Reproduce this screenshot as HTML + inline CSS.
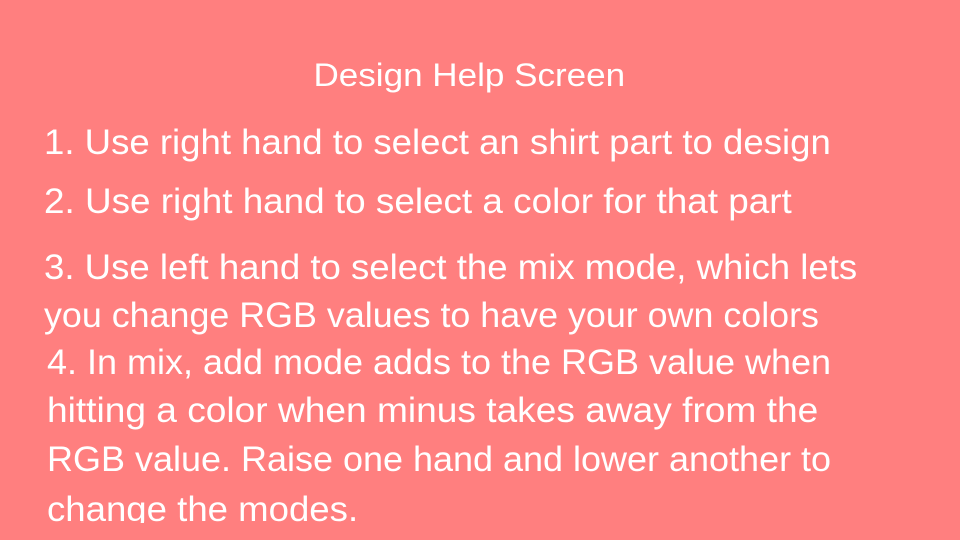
<!DOCTYPE html>
<html><head><meta charset="utf-8"><style>
html,body{margin:0;padding:0;}
body{width:960px;height:540px;background:#FF7F7F;position:relative;overflow:hidden;font-family:"Liberation Sans",sans-serif;color:#fff;}
.clip{position:absolute;left:0;top:0;width:960px;height:523px;overflow:hidden;}
.l{position:absolute;white-space:nowrap;font-size:35px;line-height:40px;transform-origin:left center;transform:scaleX(1.045);}
.t{position:absolute;left:-11px;width:960px;text-align:center;top:55px;font-size:32px;line-height:40px;}
.t span{display:inline-block;transform:scaleX(1.095);}
</style></head><body>
<div class="t"><span>Design Help Screen</span></div>
<div class="clip">
<div class="l" style="left:44px;top:123px">1. Use right hand to select an shirt part to design</div>
<div class="l" style="left:44px;top:182px;transform:scaleX(1.053)">2. Use right hand to select a color for that part</div>
<div class="l" style="left:44px;top:248px">3. Use left hand to select the mix mode, which lets</div>
<div class="l" style="left:44px;top:296px;transform:scaleX(1.024)">you change RGB values to have your own colors</div>
<div class="l" style="left:47px;top:343px;transform:scaleX(1.028)">4. In mix, add mode adds to the RGB value when</div>
<div class="l" style="left:47px;top:391px;transform:scaleX(1.06)">hitting a color when minus takes away from the</div>
<div class="l" style="left:47px;top:440px;transform:scaleX(1.028)">RGB value. Raise one hand and lower another to</div>
<div class="l" style="left:47px;top:490px">change the modes.</div>
</div>
</body></html>
